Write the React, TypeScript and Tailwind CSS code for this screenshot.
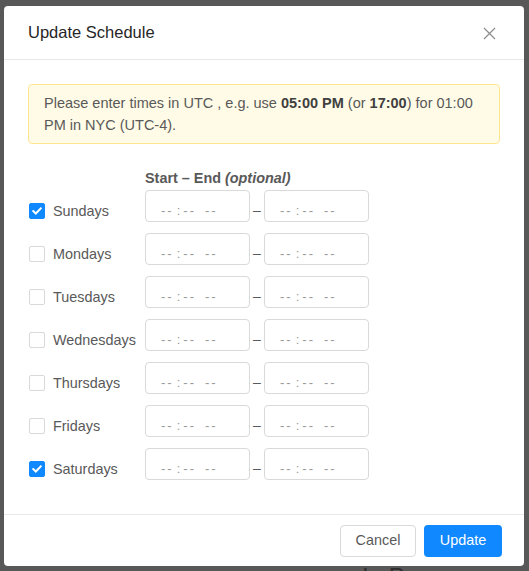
import { useState } from "react";

const days = ["Sundays", "Mondays", "Tuesdays", "Wednesdays", "Thursdays", "Fridays", "Saturdays"];

function TimeBox() {
  return (
    <div className="w-[105px] h-[32px] border border-[#d9d9d9] rounded-[4px] bg-white pl-[15px] pt-[10px] text-[13px] leading-[20px] text-[#9a9a9a] flex items-start tracking-[2px] whitespace-pre">
      <span>--</span>
      <span className="ml-[3px]">:</span>
      <span className="ml-[1px]">--</span>
      <span className="ml-[9px]">--</span>
    </div>
  );
}

function Check({ on, toggle }: { on: boolean; toggle: () => void }) {
  return (
    <button
      onClick={toggle}
      className={`w-[16px] h-[16px] rounded-[2px] flex items-center justify-center ${
        on ? "bg-[#1088ff] border border-[#1088ff]" : "bg-white border border-[#d9d9d9]"
      }`}
    >
      {on && (
        <svg width="10" height="8" viewBox="0 0 10 8" fill="none">
          <path d="M1.2 4.1L3.8 6.5L8.8 1.4" stroke="white" strokeWidth="2" strokeLinecap="square" />
        </svg>
      )}
    </button>
  );
}

export default function App() {
  const [checked, setChecked] = useState<Record<string, boolean>>({ Sundays: true, Saturdays: true });

  return (
    <div className="relative w-[529px] h-[571px] overflow-hidden bg-[#585858] pl-[4px] pt-[6px] font-['Liberation_Sans',Arial,sans-serif]">
      <div className="absolute left-[362px] top-[559px] text-[24px] text-[#2e2e2e]">In Progress</div>

      <div className="relative z-10 w-[520px] h-[560px] bg-white rounded-[4px] flex flex-col">
        <div className="h-[54px] shrink-0 border-b border-[#e8e8e8] flex items-center justify-between pl-[24px] pr-[28px]">
          <span className="text-[16.5px] text-[#262626] font-medium">Update Schedule</span>
          <svg width="13" height="13" viewBox="0 0 13 13" className="mt-[1px]">
            <path d="M1 1L12 12M12 1L1 12" stroke="#8c8c8c" strokeWidth="1.2" />
          </svg>
        </div>

        <div className="flex-1 px-[24px] pt-[24px]">
          <div className="border border-[#ffe58f] bg-[#fffbe6] rounded-[4px] px-[15px] py-[7px] text-[14.5px] leading-[22px] text-[#595959]">
            Please enter times in UTC , e.g. use <b className="text-[#404040]">05:00 PM</b> (or{" "}
            <b className="text-[#404040]">17:00</b>) for 01:00
            <br />
            PM in NYC (UTC-4).
          </div>

          <div className="pl-[117px] mt-[24px] text-[14.4px] leading-[20px] font-bold text-[#595959]">
            Start – End <i>(optional)</i>
          </div>

          <div className="mt-[2px] flex flex-col gap-[11px]">
            {days.map((d) => (
              <div key={d} className="flex items-start">
                <div className="w-[117px] flex items-center gap-[8px] pt-[11px] pl-[1px]">
                  <Check on={!!checked[d]} toggle={() => setChecked({ ...checked, [d]: !checked[d] })} />
                  <span className="text-[14.4px] leading-[20px] text-[#595959]">{d}</span>
                </div>
                <TimeBox />
                <div className="w-[14px] text-center pt-[10px] text-[14px] leading-[20px] text-[#595959]">–</div>
                <TimeBox />
              </div>
            ))}
          </div>
        </div>

        <div className="h-[52px] shrink-0 border-t border-[#e8e8e8] flex items-start justify-end gap-[8px] pt-[10px] pr-[22px]">
          <button className="h-[32px] w-[76px] rounded-[4px] border border-[#d9d9d9] bg-white text-[14.4px] text-[#595959]">
            Cancel
          </button>
          <button className="h-[32px] w-[78px] rounded-[4px] bg-[#1088ff] text-[14.4px] text-white font-medium">
            Update
          </button>
        </div>
      </div>
    </div>
  );
}
